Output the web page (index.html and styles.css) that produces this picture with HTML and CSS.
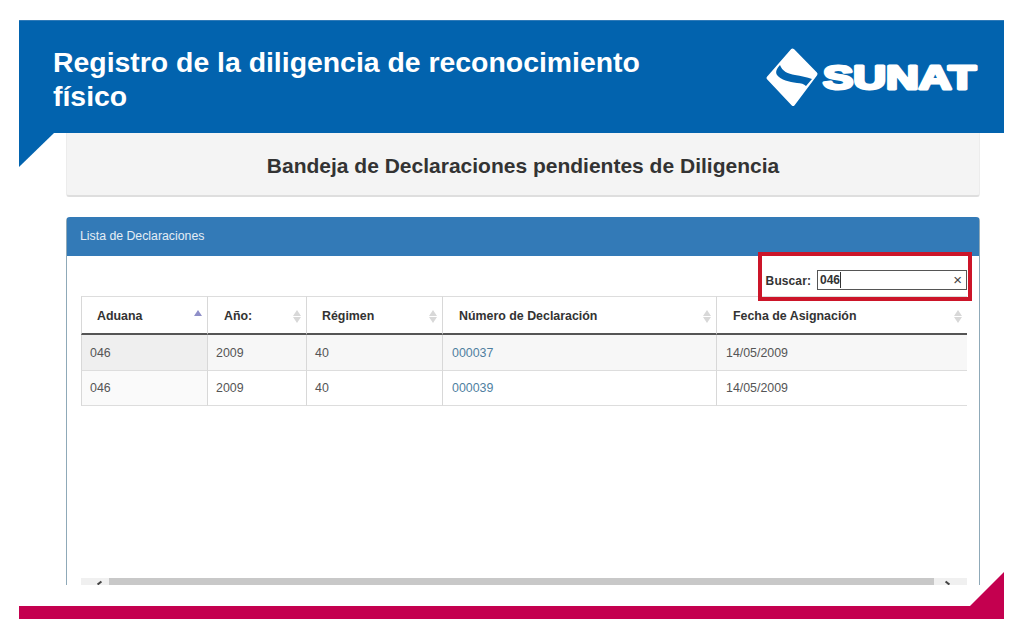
FILE: index.html
```html
<!DOCTYPE html>
<html lang="es">
<head>
<meta charset="utf-8">
<title>Registro de la diligencia de reconocimiento físico</title>
<link rel="stylesheet" href="styles.css">
</head>
<body>
<div class="slide">
  <header class="banner">
    <h1 class="banner-title">Registro de la diligencia de reconocimiento físico</h1>
    <svg class="logo" width="214" height="60" viewBox="0 0 214 60">
      <polygon class="logo-mark" points="27.5,3.5 50.5,27 28,57 3.5,31"/>
      <path class="logo-swoosh" d="M15 18 C17 24 23 27 30 28 C36 29 42 30 47 32 L41 39 C39 37 36 36 32 36 C24 35 16 33 12 28 C10 25 12 21 15 18 Z"/>
      <text class="logo-text" x="58" y="42" textLength="153" lengthAdjust="spacingAndGlyphs">SUNAT</text>
    </svg>
    <span class="banner-corner"></span>
  </header>
  <main class="content">
    <section class="title-card">
      <h2 class="title-card-text">Bandeja de Declaraciones pendientes de Diligencia</h2>
    </section>
    <section class="panel">
      <div class="panel-head">Lista de Declaraciones</div>
      <div class="panel-body">
        <div class="search-row">
          <label class="search-label">Buscar:</label>
          <div class="search-input"><span class="search-value">046</span><span class="search-clear">×</span></div>
          <span class="highlight"></span>
        </div>
        <table class="grid">
          <colgroup><col class="c1"><col class="c2"><col class="c3"><col class="c4"><col class="c5"></colgroup>
          <thead>
            <tr>
              <th class="sorted">Aduana<span class="sort-up"></span></th>
              <th>Año:<span class="sort"></span></th>
              <th>Régimen<span class="sort"></span></th>
              <th>Número de Declaración<span class="sort"></span></th>
              <th>Fecha de Asignación<span class="sort"></span></th>
            </tr>
          </thead>
          <tbody>
            <tr class="odd"><td class="key">046</td><td>2009</td><td>40</td><td><a class="link">000037</a></td><td>14/05/2009</td></tr>
            <tr class="even"><td class="key2">046</td><td>2009</td><td>40</td><td><a class="link">000039</a></td><td>14/05/2009</td></tr>
          </tbody>
        </table>
        <div class="scrollbar">
          <span class="arrow arrow-left"></span>
          <span class="thumb"></span>
          <span class="arrow arrow-right"></span>
        </div>
      </div>
    </section>
  </main>
  <footer class="footer-bar"><span class="footer-corner"></span></footer>
</div>
</body>
</html>
```
FILE: styles.css
```css
* { box-sizing: border-box; }
html, body { margin: 0; padding: 0; background: #fff; }
body { font-family: "Liberation Sans", Arial, sans-serif; }
.slide { width: 1024px; height: 640px; padding-top: 20px; overflow: hidden; }

.banner {
  position: relative; z-index: 2;
  display: flex; align-items: flex-start; justify-content: space-between;
  height: 113px; margin: 0 20px 0 19px; padding: 24px 25px 0 34px;
  background: #0263ae; border-top: 1px solid #2f7ab8;
}
.banner-title {
  margin: 0; width: 620px;
  font-size: 28.4px; line-height: 34px; font-weight: 700; color: #fff;
}
.logo { margin-top: 2px; flex: none; }
.logo-mark { fill: #fff; stroke: #fff; stroke-width: 4px; stroke-linejoin: round; }
.logo-swoosh { fill: #0263ae; }
.logo-text {
  font-family: "Liberation Sans", Arial, sans-serif; font-weight: 700; font-size: 34px;
  fill: #fff; stroke: #fff; stroke-width: 3px; stroke-linejoin: round;
}
.banner-corner {
  position: absolute; left: 0; top: 112px; width: 35px; height: 34px;
  background: #0263ae; clip-path: polygon(0 0, 100% 0, 0 100%);
}

.content { width: 914px; height: 452px; margin-left: 66px; overflow: hidden; }
.title-card {
  height: 64px; padding-top: 19px; text-align: center;
  background: #f4f4f4; border-radius: 0 0 3px 3px;
  border: 1px solid #ececec; border-top: 0; border-bottom: 2px solid #dedede;
}
.title-card-text { margin: 0; font-size: 21px; line-height: 27px; font-weight: 700; color: #333; }

.panel {
  height: 368px; margin-top: 20px;
  border: 1px solid #337ab7; border-bottom: 0; border-radius: 4px 4px 0 0;
  border-color: #337ab7 #8fa9b8;
}
.panel-head { height: 38px; padding: 10px 13px 0; font-size: 12.3px; line-height: 16px; color: #e4edf5; background: #337ab7; }
.panel-body { padding: 14px 12px 0 14px; }

.search-row {
  position: relative;
  display: flex; align-items: center; justify-content: flex-end; gap: 6px;
  height: 20px;
  font-size: 12px; font-weight: 700; color: #333;
}
.search-label { letter-spacing: .1px; padding-top: 2px; }
.search-input {
  display: flex; align-items: center; justify-content: space-between;
  width: 150px; height: 20px; padding: 0 4px 0 2px;
  border: 1px solid #555; background: #fff;
}
.search-value { font-weight: 700; border-right: 1px solid #333; line-height: 16px; }
.search-clear { font-weight: 400; font-size: 15px; line-height: 16px; color: #444; }
.highlight {
  position: absolute; z-index: 1; right: -5px; top: -18px; width: 214px; height: 49px;
  border: 4px solid #cc1529;
}

.grid { width: 886px; margin-top: 6px; border-collapse: separate; border-spacing: 0; table-layout: fixed; font-size: 12.4px; color: #555; }
.c1 { width: 126px; } .c2 { width: 99px; } .c3 { width: 136px; } .c4 { width: 274px; } .c5 { width: 251px; }
.grid th {
  position: relative; height: 39px; padding: 2px 16px 0 16px; text-align: left;
  font-weight: 700; color: #333; background: #fff;
  border-top: 1px solid #ddd; border-left: 1px solid #d8d8d8; border-bottom: 2px solid #555;
}
.grid th:first-child, .grid th:nth-child(3) { padding-left: 15px; }
.grid td { height: 36px; padding: 0 8px; border-left: 1px solid #d8d8d8; border-bottom: 1px solid #ddd; background: #fff; }
.grid td:nth-child(n+4) { padding-left: 9px; }
.grid tr.even td { height: 35px; }
.grid tr.odd td { background: #f7f7f7; }
.grid tr.odd td.key { background: #efefef; }
.grid tr.even td.key2 { background: #fafafa; }
.link { color: #4f7f9f; }

.sort, .sort-up { position: absolute; right: 5px; top: 13px; width: 8px; height: 13px; }
.sort::before, .sort::after {
  content: ""; position: absolute; left: 0; border-left: 4px solid transparent; border-right: 4px solid transparent;
}
.sort::before { top: 0; border-bottom: 6px solid #d8d8d8; }
.sort::after { bottom: 0; border-top: 6px solid #d8d8d8; }
.sort-up::before {
  content: ""; position: absolute; left: 0; top: 0;
  border-left: 4px solid transparent; border-right: 4px solid transparent; border-bottom: 6px solid #8f8fc8;
}

.scrollbar {
  display: flex; align-items: center; height: 7px; width: 886px; margin-top: 172px;
  background: #f0f0f0;
}
.thumb { flex: 1; height: 7px; background: #c8c8c8; }
.arrow { position: relative; height: 7px; flex: none; }
.arrow-left { width: 28px; }
.arrow-right { width: 33px; }
.arrow::after { content: ""; position: absolute; top: 4px; width: 5px; height: 2px; background: #444; }
.arrow-left::after { left: 16px; transform: rotate(-40deg); }
.arrow-right::after { left: 11px; transform: rotate(40deg); }

.footer-bar { position: relative; height: 13px; margin: 21px 20px 0 19px; background: #c4004f; }
.footer-corner {
  position: absolute; right: 0; bottom: 12px; width: 35px; height: 35px;
  background: #c4004f; clip-path: polygon(0 100%, 100% 0, 100% 100%);
}
```
